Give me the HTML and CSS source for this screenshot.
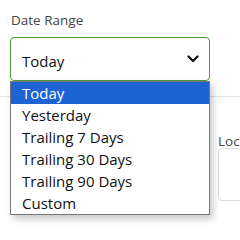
FILE: index.html
```html
<!DOCTYPE html>
<html>
<head>
<meta charset="utf-8">
<link rel="stylesheet" href="styles.css">
</head>
<body>
<div class="page">
  <div class="top">
    <div class="field">
      <div class="label">Date Range</div>
      <div class="select-wrap">
        <div class="select">
          <span>Today</span>
          <svg class="chev" width="12" height="8" viewBox="0 0 12 8"><path d="M1.5 1.5 L6 6 L10.5 1.5" fill="none" stroke="#111" stroke-width="2.2" stroke-linecap="round" stroke-linejoin="round"/></svg>
        </div>
        <ul class="menu">
          <li class="active">Today</li>
          <li>Yesterday</li>
          <li>Trailing 7 Days</li>
          <li>Trailing 30 Days</li>
          <li>Trailing 90 Days</li>
          <li>Custom</li>
        </ul>
      </div>
    </div>
  </div>
  <div class="bottom">
    <div class="col-spacer"></div>
    <div class="field2">
      <div class="label2">Location</div>
      <div class="input"></div>
    </div>
  </div>
</div>
</body>
</html>
```

FILE: styles.css
```css
html, body {
  margin: 0;
  padding: 0;
  background: #fff;
  width: 240px;
  height: 240px;
  overflow: hidden;
  font-family: "Open Sans", "Noto Sans", sans-serif;
}
.page {
  width: 240px;
}
.top {
  height: 97px;
  border-bottom: 1px solid #e3e3e3;
  padding: 11px 0 0 10px;
  box-sizing: border-box;
}
.label {
  font-size: 13.5px;
  color: #444;
  line-height: 18px;
  margin-left: 1px;
}
.select-wrap {
  position: relative;
  margin-top: 8px;
  width: 200px;
}
.select {
  box-sizing: border-box;
  height: 44px;
  border: 1px solid #4a9a3a;
  border-radius: 4px;
  display: flex;
  align-items: center;
  justify-content: space-between;
  padding: 4px 10px 0 11px;
  font-size: 15px;
  color: #111;
}
.chev {
  display: block;
  margin-top: -4px;
}
.menu {
  position: absolute;
  top: 44px;
  left: 0;
  width: 200px;
  box-sizing: border-box;
  margin: 0;
  padding: 0;
  list-style: none;
  background: #fff;
  border: 1px solid #777;
  box-shadow: 3px 4px 7px rgba(0,0,0,0.22);
  z-index: 5;
}
.menu li {
  height: 22px;
  line-height: 22px;
  padding-left: 11px;
  font-size: 15px;
  color: #111;
}
.menu li.active {
  background: #1e63d3;
  color: #fff;
}
.bottom {
  display: flex;
  padding-top: 38px;
}
.col-spacer {
  width: 218px;
  flex: none;
}
.field2 {
  flex: none;
  width: 22px;
  overflow: hidden;
}
.label2 {
  font-size: 13.5px;
  color: #444;
  line-height: 13px;
  white-space: nowrap;
}
.input {
  height: 53px;
  width: 100px;
  box-sizing: border-box;
  border: 1px solid #ddd;
  border-radius: 4px;
}
```
